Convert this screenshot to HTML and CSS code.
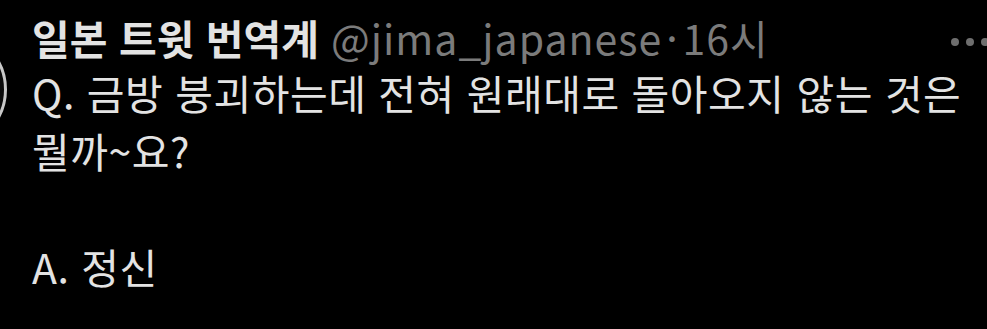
FILE: index.html
```html
<!DOCTYPE html>
<html lang="ko">
<head>
  <meta charset="UTF-8" />
  <meta name="viewport" content="width=device-width, initial-scale=1.0" />
  <title>일본 트윗 번역계</title>
  <link rel="stylesheet" href="styles.css">
</head>
<body>
  <div class="tweet">
    <!-- Avatar, mostly cut off on the left -->
    <div class="avatar"></div>

    <div class="tweet-body">
      <div class="tweet-header">
        <span class="name">일본 트윗 번역계</span>
        <span class="handle">@jima_japanese</span>
        <span class="dot">·</span>
        <span class="time">16시</span>
        <span class="more">
          <svg width="40" height="10" viewBox="0 0 40 10">
            <circle cx="4" cy="5" r="4" fill="#6e6e6e" />
            <circle cx="19" cy="5" r="4" fill="#6e6e6e" />
            <circle cx="34" cy="5" r="4" fill="#6e6e6e" />
          </svg>
        </span>
      </div>

      <div class="tweet-text">
        <p>Q. 금방 붕괴하는데 전혀 원래대로 돌아오지 않는 것은 뭘까~요?</p>
        <p class="answer">A. 정신</p>
      </div>
    </div>
  </div>
</body>
</html>
```

FILE: styles.css
```css
/* Reset */
* {
  margin: 0;
  padding: 0;
  box-sizing: border-box;
  font-family: 'Noto Sans CJK KR', 'Noto Sans', sans-serif;
}

body {
  background-color: #000;
  color: #e3e3e3;
  width: 987px;
  height: 329px;
  overflow: hidden;
}

/* Tweet row */
.tweet {
  display: flex;
  align-items: flex-start;
  gap: 25px;
}

.avatar {
  flex: none;
  width: 119px;
  height: 119px;
  margin-left: -112px;
  margin-top: 30px;
  border-radius: 50%;
  border: 3px solid #c8c8c8;
  background-color: #0b0b0b;
}

.tweet-body {
  flex: 1;
  min-width: 0;
}

/* Header: name, handle, time */
.tweet-header {
  display: flex;
  align-items: baseline;
  font-size: 41px;
  line-height: 52px;
  margin-top: 11px;
  white-space: nowrap;
}

.name {
  font-size: 41px;
  font-weight: bold;
  color: #e3e3e3;
  margin-right: 12px;
}

.handle,
.dot,
.time {
  color: #7b7b7b;
  letter-spacing: 1px;
}

.dot {
  margin: 0 4px;
}

.more {
  margin-left: auto;
  margin-right: -4px;
  margin-top: 10px;
  align-self: center;
  display: flex;
}

/* Text */
.tweet-text {
  font-size: 41px;
  letter-spacing: 0.5px;
  line-height: 58px;
}

.answer {
  margin-top: 58px;
}
```
